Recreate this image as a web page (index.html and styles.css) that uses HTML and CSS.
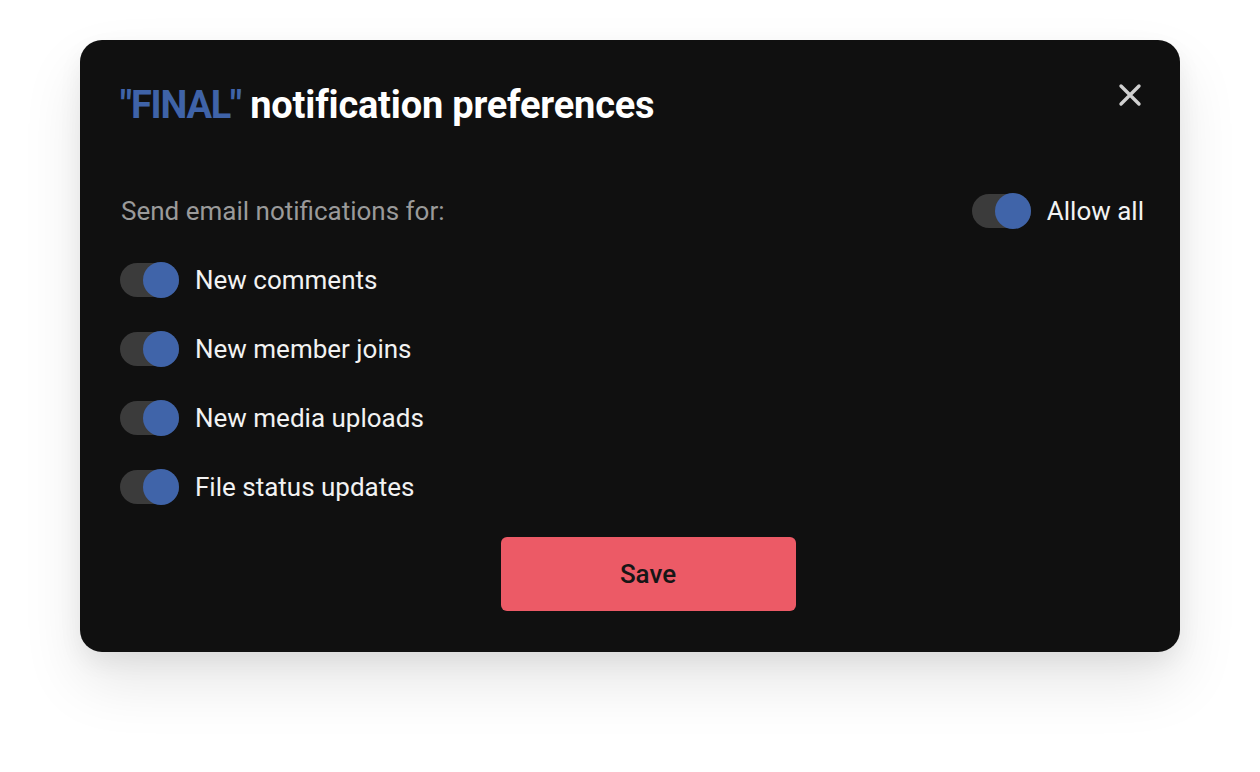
FILE: index.html
```html
<!DOCTYPE html>
<html>
<head>
<meta charset="utf-8">
<link rel="stylesheet" href="styles.css">
</head>
<body>
<div class="stage">
  <div class="dialog">
    <div class="header">
      <h1 class="title"><span class="accent">"FINAL"</span> notification preferences</h1>
      <button class="close" aria-label="Close">
        <svg width="24" height="24" viewBox="0 0 24 24"><path d="M3 3 L21 21 M21 3 L3 21" stroke="#d0d0d0" stroke-width="3.4" stroke-linecap="round"/></svg>
      </button>
    </div>
    <div class="topline">
      <span class="hint">Send email notifications for:</span>
      <label class="opt">
        <span class="toggle"><span class="thumb"></span></span>
        <span class="lbl">Allow all</span>
      </label>
    </div>
    <div class="list">
      <label class="opt"><span class="toggle"><span class="thumb"></span></span><span class="lbl">New comments</span></label>
      <label class="opt"><span class="toggle"><span class="thumb"></span></span><span class="lbl">New member joins</span></label>
      <label class="opt"><span class="toggle"><span class="thumb"></span></span><span class="lbl">New media uploads</span></label>
      <label class="opt"><span class="toggle"><span class="thumb"></span></span><span class="lbl">File status updates</span></label>
    </div>
    <div class="footer">
      <button class="save">Save</button>
    </div>
  </div>
</div>
</body>
</html>
```
FILE: styles.css
```css
html, body {
  margin: 0;
  padding: 0;
  background: #ffffff;
  font-family: Roboto, "Liberation Sans", sans-serif;
}
.stage {
  width: 1260px;
  height: 772px;
  padding: 40px 80px 0 80px;
  box-sizing: border-box;
}
.dialog {
  width: 1100px;
  height: 612px;
  box-sizing: border-box;
  background: #101010;
  border-radius: 22px;
  box-shadow: 0 30px 60px rgba(0,0,0,0.10), 0 10px 25px rgba(0,0,0,0.06);
  padding: 40px 36px 41px 40px;
  display: flex;
  flex-direction: column;
}
.header {
  display: flex;
  justify-content: space-between;
  align-items: flex-start;
  height: 54px;
}
.title {
  margin: 0;
  font-size: 38px;
  font-weight: 700;
  color: #ffffff;
  line-height: 50px;
  letter-spacing: -0.2px;
}
.accent {
  color: #3f63a8;
  letter-spacing: -1.2px;
}
.close {
  background: none;
  border: 0;
  padding: 0;
  margin: 1px 0 0 0;
  width: 28px;
  height: 28px;
  display: flex;
  align-items: center;
  justify-content: center;
}
.topline {
  margin-top: 58px;
  display: flex;
  justify-content: space-between;
  align-items: center;
  height: 38px;
}
.hint {
  font-size: 26px;
  color: #9a9a9a;
  margin-left: 1px;
}
.list {
  margin-top: 31px;
  display: flex;
  flex-direction: column;
  gap: 31px;
}
.opt {
  display: flex;
  align-items: center;
  height: 38px;
  gap: 16px;
}
.toggle {
  position: relative;
  width: 59px;
  height: 34px;
  border-radius: 17px;
  background: #3b3b3b;
  flex: none;
}
.thumb {
  position: absolute;
  right: 0;
  top: -1px;
  width: 36px;
  height: 36px;
  border-radius: 50%;
  background: #4064a9;
}
.lbl {
  font-size: 26px;
  color: #f2f2f2;
}
.footer {
  margin-top: auto;
  display: flex;
  justify-content: center;
}
.save {
  width: 295px;
  height: 74px;
  border: 0;
  border-radius: 6px;
  background: #ec5a66;
  color: #161616;
  font-family: Roboto, "Liberation Sans", sans-serif;
  font-size: 26px;
  font-weight: 500;
  margin-left: 32px;
}
```
